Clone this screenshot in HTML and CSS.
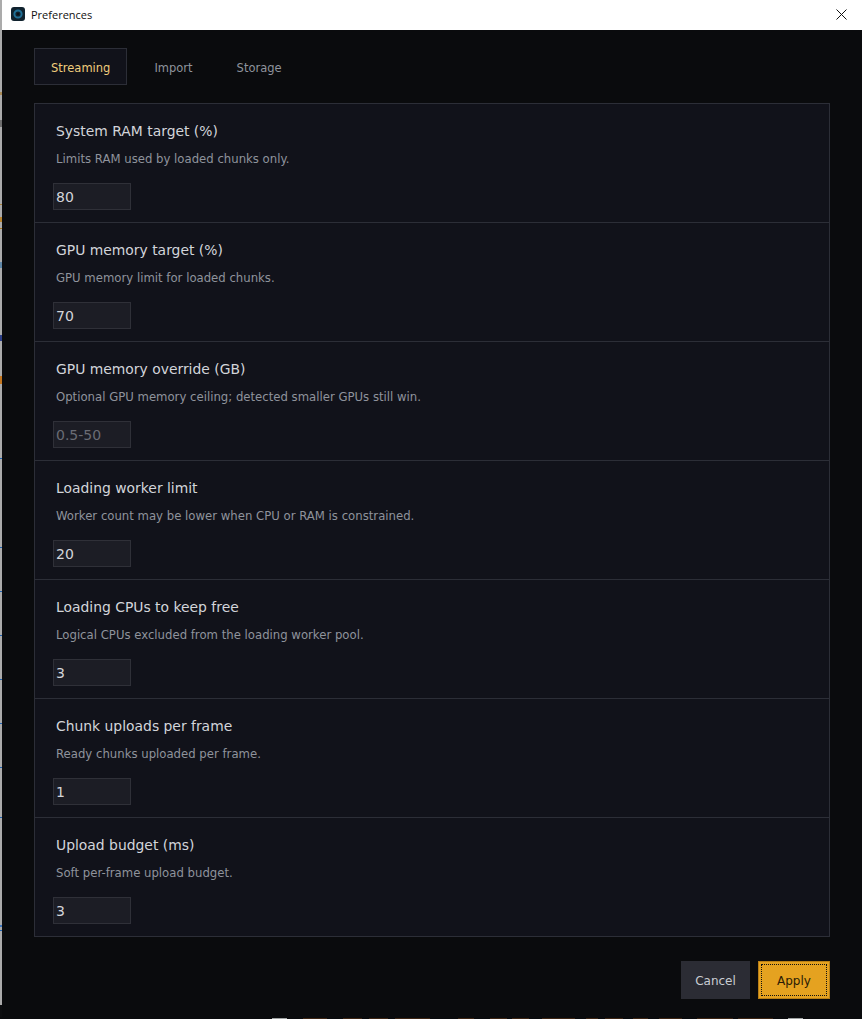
FILE: index.html
```html
<!DOCTYPE html>
<html lang="en">
<head>
    <meta charset="UTF-8">
    <meta name="viewport" content="width=device-width, initial-scale=1.0">
    <title>Preferences</title>
    <link rel="stylesheet" href="styles.css">
</head>
<body>
    <div class="screen">
        <!-- sliver of the desktop left of the window -->
        <svg class="edge" width="2" height="1017" viewBox="0 0 2 1017">
            <rect width="2" height="1017" fill="#ababab"/>
            <rect y="92" width="2" height="3" fill="#a98a55"/>
            <rect y="120" width="2" height="7" fill="#6f6f6f"/>
            <rect y="204" width="2" height="1" fill="#a8813a"/>
            <rect y="217" width="2" height="5" fill="#b8842f"/>
            <rect y="228" width="2" height="1" fill="#a8761c"/>
            <rect y="262" width="2" height="6" fill="#5f88a8"/>
            <rect y="335" width="2" height="6" fill="#2c3f88"/>
            <rect y="376" width="2" height="8" fill="#c4761f"/>
            <rect y="458" width="2" height="1" fill="#1f62b0"/>
            <rect y="547" width="2" height="1" fill="#1f62b0"/>
            <rect y="591" width="2" height="1" fill="#1f62b0"/>
            <rect y="635" width="2" height="1" fill="#1f62b0"/>
            <rect y="679" width="2" height="1" fill="#1f62b0"/>
            <rect y="723" width="2" height="1" fill="#1f62b0"/>
            <rect y="767" width="2" height="1" fill="#1f62b0"/>
            <rect y="817" width="2" height="1" fill="#1f62b0"/>
            <rect y="925" width="2" height="2" fill="#3f78c0"/>
            <rect y="930" width="2" height="1" fill="#1f62b0"/>
            <rect y="1005" width="2" height="12" fill="#0d0e10"/>
        </svg>

        <div class="window">
            <div class="titlebar">
                <svg class="app-icon" width="14" height="14" viewBox="0 0 14 14">
                    <rect width="14" height="14" rx="3" fill="#10222e"/>
                    <circle cx="7" cy="7" r="3.6" fill="none" stroke="#1f6f96" stroke-width="2"/>
                    <circle cx="7" cy="7" r="1.2" fill="#0b1218"/>
                </svg>
                <span class="window-title">Preferences</span>
                <svg class="close-icon" width="11" height="11" viewBox="0 0 11 11">
                    <path d="M0.5 0.5 L10.5 10.5 M10.5 0.5 L0.5 10.5" stroke="#111" stroke-width="1" fill="none"/>
                </svg>
            </div>

            <div class="content">
                <div class="tabs">
                    <div class="tab active">Streaming</div>
                    <div class="tab">Import</div>
                    <div class="tab">Storage</div>
                </div>

                <div class="panel">
                    <div class="setting">
                        <div class="setting-label">System RAM target (%)</div>
                        <div class="setting-help">Limits RAM used by loaded chunks only.</div>
                        <div class="field">80</div>
                    </div>
                    <div class="setting">
                        <div class="setting-label">GPU memory target (%)</div>
                        <div class="setting-help">GPU memory limit for loaded chunks.</div>
                        <div class="field">70</div>
                    </div>
                    <div class="setting">
                        <div class="setting-label">GPU memory override (GB)</div>
                        <div class="setting-help">Optional GPU memory ceiling; detected smaller GPUs still win.</div>
                        <div class="field placeholder">0.5-50</div>
                    </div>
                    <div class="setting">
                        <div class="setting-label">Loading worker limit</div>
                        <div class="setting-help">Worker count may be lower when CPU or RAM is constrained.</div>
                        <div class="field">20</div>
                    </div>
                    <div class="setting">
                        <div class="setting-label">Loading CPUs to keep free</div>
                        <div class="setting-help">Logical CPUs excluded from the loading worker pool.</div>
                        <div class="field">3</div>
                    </div>
                    <div class="setting">
                        <div class="setting-label">Chunk uploads per frame</div>
                        <div class="setting-help">Ready chunks uploaded per frame.</div>
                        <div class="field">1</div>
                    </div>
                    <div class="setting">
                        <div class="setting-label">Upload budget (ms)</div>
                        <div class="setting-help">Soft per-frame upload budget.</div>
                        <div class="field">3</div>
                    </div>
                </div>

                <div class="actions">
                    <button class="btn">Cancel</button>
                    <button class="btn primary">Apply</button>
                </div>
            </div>
        </div>
    </div>

    <!-- sliver of the desktop below the window -->
    <svg class="taskstrip" width="862" height="2" viewBox="0 0 862 2">
        <g fill="#9fa3a3">
            <rect x="272" y="1" width="15" height="1"/>
            <rect x="788" y="1" width="15" height="1"/>
        </g>
        <g fill="#3d2513">
            <rect x="303" y="1" width="24" height="1"/>
            <rect x="343" y="1" width="19" height="1"/>
            <rect x="369" y="1" width="19" height="1"/>
            <rect x="395" y="1" width="35" height="1"/>
            <rect x="458" y="1" width="16" height="1"/>
            <rect x="490" y="1" width="17" height="1"/>
            <rect x="512" y="1" width="17" height="1"/>
            <rect x="542" y="1" width="18" height="1"/>
            <rect x="560" y="1" width="15" height="1"/>
            <rect x="586" y="1" width="12" height="1"/>
            <rect x="605" y="1" width="18" height="1"/>
            <rect x="633" y="1" width="15" height="1"/>
            <rect x="659" y="1" width="23" height="1"/>
            <rect x="697" y="1" width="36" height="1"/>
            <rect x="738" y="1" width="35" height="1"/>
        </g>
    </svg>
</body>
</html>
```

FILE: styles.css
```css
html, body {
    margin: 0;
    height: 100%;
}
body {
    background-color: #0a0b0d;
    overflow: hidden;
    font-family: "DejaVu Sans", sans-serif;
}
.screen {
    display: flex;
    height: 1017px;
}
.edge {
    flex: none;
    display: block;
}
.taskstrip {
    display: block;
}
.window {
    flex: 1;
    background-color: #0a0b0d;
    display: flex;
    flex-direction: column;
}
.titlebar {
    height: 30px;
    flex: none;
    box-sizing: border-box;
    background-color: #fff;
    display: flex;
    align-items: center;
    padding: 0 15px 2px 9px;
}
.app-icon {
    margin-right: 6px;
}
.window-title {
    font-family: "Open Sans", sans-serif;
    font-size: 11px;
    color: #111;
}
.close-icon {
    margin-left: auto;
}
.content {
    flex: 1;
    padding: 18px 32px 0;
}
.tabs {
    display: flex;
    gap: 10px;
    margin-bottom: 18px;
}
.tab {
    height: 35px;
    line-height: 38px;
    padding: 0 16px;
    border: 1px solid transparent;
    font-size: 11.5px;
    color: #8f939c;
}
.tab.active {
    background-color: #11121a;
    border-color: #2c2e37;
    color: #f0cd7c;
}
.panel {
    background-color: #11121a;
    border: 1px solid #2c2e37;
}
.setting {
    height: 119px;
    box-sizing: border-box;
    padding: 18px 18px 0;
    border-bottom: 1px solid #2c2e37;
}
.setting:last-child {
    border-bottom: none;
    height: 118px;
}
.setting-label {
    font-size: 13.9px;
    line-height: 19px;
    padding-left: 3px;
    color: #d3d5da;
}
.setting-help {
    font-size: 11.7px;
    line-height: 16px;
    margin-top: 10px;
    padding-left: 3px;
    color: #8f939c;
}
.field {
    width: 78px;
    height: 27px;
    line-height: 27px;
    margin-top: 16px;
    padding-left: 2px;
    box-sizing: border-box;
    background-color: #1c1d25;
    border: 1px solid #2f3038;
    font-size: 14px;
    color: #d3d5da;
}
.field.placeholder {
    color: #6a6c74;
}
.actions {
    display: flex;
    justify-content: flex-end;
    gap: 8px;
    margin-top: 24px;
}
.btn {
    height: 38px;
    width: 69px;
    padding: 2px 0 0;
    border: none;
    background-color: #2b2c34;
    color: #c9ccd3;
    font-family: "DejaVu Sans", sans-serif;
    font-size: 12px;
}
.btn.primary {
    width: 72px;
    background-color: #e5a220;
    border: 1px solid #b87f16;
    outline: 1px dotted #111;
    outline-offset: -4px;
    color: #2a1c05;
}
```
